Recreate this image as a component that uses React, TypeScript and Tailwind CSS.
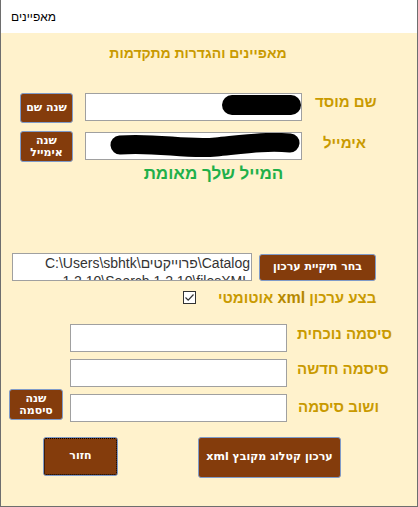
import React from "react";

const btn =
  "bg-[#843c0c] border border-[#7f9bc9] rounded-[3px] text-white font-bold text-[11px] font-['DejaVu_Sans',sans-serif] flex items-center justify-center text-center shrink-0";
const input = "bg-white border border-[#a0a0a0] shrink-0";
const label = "text-[#c99a00] font-bold text-[15px] leading-[18px] whitespace-nowrap shrink-0";

export default function App() {
  return (
    <div className="w-[418px] h-[507px] flex flex-col border-x border-b border-[#6e6e6e] bg-[#fff2cc] font-['Liberation_Sans',sans-serif] overflow-hidden">
      <div className="h-[33px] bg-white flex items-center pl-[10px] shrink-0">
        <span dir="rtl" className="text-[12px] text-black">מאפיינים</span>
      </div>

      <div className="flex flex-col">
        <div dir="rtl" className="mt-[10px] h-[20px] leading-[20px] flex justify-center pr-[22px] text-[14px] font-bold text-[#c99a00]">
          מאפיינים והגדרות מתקדמות
        </div>

        {/* Row 1 */}
        <div className="mt-[30px] h-[30px] flex items-start">
          <div dir="rtl" className={`${btn} ml-[19px] w-[53px] h-[30px]`}>שנה שם</div>
          <div className={`${input} relative ml-[12px] w-[217px] h-[28px]`}>
            <svg className="absolute left-0 top-0" width="217" height="28">
              <line x1="146" y1="11" x2="205" y2="11" stroke="black" strokeWidth="20" strokeLinecap="round" />
            </svg>
          </div>
          <div dir="rtl" className={`${label} ml-[13px]`}>שם מוסד</div>
        </div>

        {/* Row 2 */}
        <div className="mt-[8px] h-[31px] flex items-start">
          <div dir="rtl" className={`${btn} ml-[19px] w-[53px] h-[31px] leading-[12px] flex-col`}>
            <span>שנה</span>
            <span>אימייל</span>
          </div>
          <div className={`${input} relative ml-[12px] mt-[1px] w-[217px] h-[28px]`}>
            <svg className="absolute left-0 top-0" width="217" height="28">
              <path d="M34 12 C 70 9, 100 17, 130 14 S 180 8, 204 10" fill="none" stroke="black" strokeWidth="19" strokeLinecap="round" />
            </svg>
          </div>
          <div dir="rtl" className={`${label} ml-[21px] mt-[3px]`}>אימייל</div>
        </div>

        <div dir="rtl" className="mt-[2px] h-[20px] leading-[20px] flex justify-center pl-[9px] text-[17px] font-bold text-[#1fb04a]">
          המייל שלך מאומת
        </div>

        {/* Folder row */}
        <div className="mt-[69px] h-[28px] flex items-start">
          <div className={`${input} ml-[11px] w-[240px] h-[28px] overflow-hidden`}>
            <div dir="ltr" className="text-right text-[14px] leading-[18px] text-[#333] pr-[1px] pl-[2px]">
              C:\Users\sbhtk\פרוייקטים\Catalog 1.2.10\Search 1.2.10\filesXML
            </div>
          </div>
          <div dir="rtl" className={`${btn} ml-[7px] mt-[1px] w-[117px] h-[27px]`}>בחר תיקיית ערכון</div>
        </div>

        {/* Checkbox row */}
        <div className="mt-[8px] h-[17px] flex items-center">
          <div className="ml-[182px] w-[13px] h-[13px] border border-[#333] bg-white flex items-center justify-center shrink-0">
            <svg width="11" height="11" viewBox="0 0 11 11">
              <path d="M1.5 5.5 L4.2 8.2 L9.5 2.5" fill="none" stroke="#333" strokeWidth="1.2" />
            </svg>
          </div>
          <div dir="rtl" className={`${label} ml-[22px]`}>
            בצע ערכון <span className="text-[#b58800] text-[16px]">xml</span> אוטומטי
          </div>
        </div>

        {/* Password rows */}
        <div className="mt-[18px] h-[28px] flex items-start">
          <div className={`${input} ml-[69px] w-[217px] h-[28px]`} />
          <div dir="rtl" className={`${label} ml-[10px] mt-[1px]`}>סיסמה נוכחית</div>
        </div>
        <div className="mt-[7px] h-[28px] flex items-start">
          <div className={`${input} ml-[69px] w-[217px] h-[28px]`} />
          <div dir="rtl" className={`${label} ml-[10px] mt-[1px]`}>סיסמה חדשה</div>
        </div>
        <div className="mt-[2px] h-[33px] flex items-start">
          <div dir="rtl" className={`${btn} ml-[8px] w-[54px] h-[31px] leading-[12px] flex-col`}>
            <span>שנה</span>
            <span>סיסמה</span>
          </div>
          <div className={`${input} ml-[7px] mt-[5px] w-[217px] h-[28px]`} />
          <div dir="rtl" className={`${label} ml-[11px] mt-[9px]`}>ושוב סיסמה</div>
        </div>

        {/* Bottom buttons */}
        <div className="mt-[15px] flex items-start">
          <div dir="rtl" className={`${btn} ml-[42px] w-[75px] h-[39px] outline outline-1 outline-dotted outline-black outline-offset-[-2px]`}>
            חזור
          </div>
          <div dir="rtl" className={`${btn} ml-[80px] w-[143px] h-[41px]`}>ערכון קטלוג מקובץ xml</div>
        </div>
      </div>
    </div>
  );
}
